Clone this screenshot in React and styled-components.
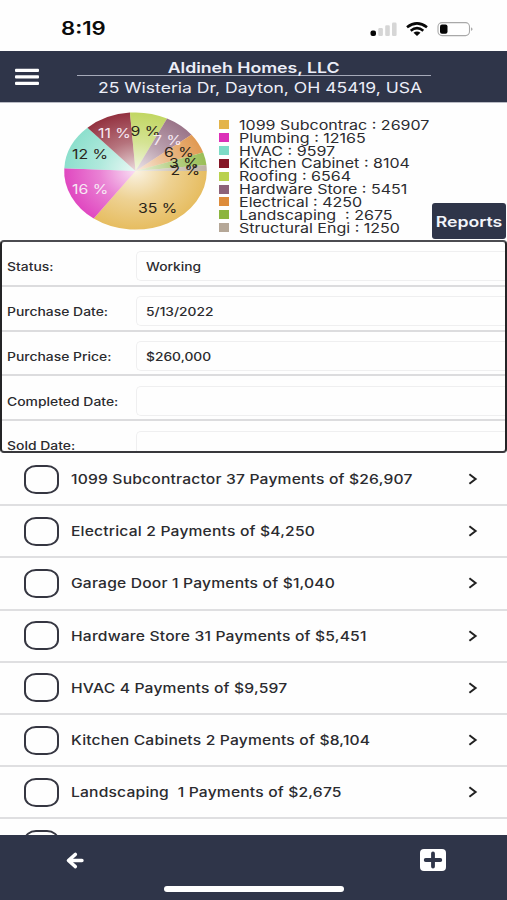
import React from 'react';
import styled, { createGlobalStyle } from 'styled-components';

const navy = '#2f3549';
const ink = '#2b2b2f';

const categories = [
  { name: '1099 Subcontrac', amount: 26907, color: '#e3b44b', percent: '35 %', x: 138, y: 213, dark: true },
  { name: 'Plumbing', amount: 12165, color: '#dc2fb8', percent: '16 %', x: 72, y: 193.5 },
  { name: 'HVAC', amount: 9597, color: '#7ddbc6', percent: '12 %', x: 72, y: 158.5, dark: true },
  { name: 'Kitchen Cabinet', amount: 8104, color: '#851626', percent: '11 %', x: 98, y: 138 },
  { name: 'Roofing', amount: 6564, color: '#b9d14d', percent: '9 %', x: 130.5, y: 136, dark: true },
  { name: 'Hardware Store', amount: 5451, color: '#8d6279', percent: '7 %', x: 153, y: 144.5 },
  { name: 'Electrical', amount: 4250, color: '#dd8c3b', percent: '6 %', x: 164, y: 156.5, dark: true },
  { name: 'Landscaping ', amount: 2675, color: '#8cb53f', percent: '3 %', x: 169, y: 167.5, dark: true },
  { name: 'Structural Engi', amount: 1250, color: '#b5a797', percent: '2 %', x: 170.5, y: 174.5, dark: true },
];

const details = [
  { label: 'Status:', value: 'Working' },
  { label: 'Purchase Date:', value: '5/13/2022' },
  { label: 'Purchase Price:', value: '$260,000' },
  { label: 'Completed Date:', value: '' },
  { label: 'Sold Date:', value: '' },
];

const payments = [
  '1099 Subcontractor 37 Payments of $26,907',
  'Electrical 2 Payments of $4,250',
  'Garage Door 1 Payments of $1,040',
  'Hardware Store 31 Payments of $5,451',
  'HVAC 4 Payments of $9,597',
  'Kitchen Cabinets 2 Payments of $8,104',
  'Landscaping  1 Payments of $2,675',
  '',
];

export default function App() {
  return (
    <Screen>
      <GlobalStyle />
      <StatusBar>
        <Text $size={18} $weight={600} $stretch={1.23} $color="#0b0b0b">
          8:19
        </Text>
        <StatusIcons />
      </StatusBar>
      <Header>
        <MenuIcon />
        <HeaderText>
          <Company>
            <Text $size={14.3} $weight={600} $stretch={1.235} $origin="center">
              Aldineh Homes, LLC
            </Text>
          </Company>
          <Address>
            <Text $size={14.3} $stretch={1.227} $origin="center">
              25 Wisteria Dr, Dayton, OH 45419, USA
            </Text>
          </Address>
        </HeaderText>
      </Header>
      <Summary>
        <PieChart />
        <Legend>
          {categories.map(({ name, amount, color }) => (
            <LegendItem key={name}>
              <Swatch $color={color} />
              <Text $size={13.2} $stretch={1.215}>
                {name} : {amount}
              </Text>
            </LegendItem>
          ))}
        </Legend>
        <ReportsButton>
          <Text $size={14.3} $weight={600} $stretch={1.235} $origin="center" $color="#f3f4fa">
            Reports
          </Text>
        </ReportsButton>
      </Summary>
      <Details>
        {details.map(({ label, value }) => (
          <DetailRow key={label}>
            <DetailLabel>
              <Text $size={11.5} $weight={500} $stretch={1.21}>
                {label}
              </Text>
            </DetailLabel>
            <Field>
              <Text $size={11.5} $weight={500} $stretch={1.2}>
                {value}
              </Text>
            </Field>
          </DetailRow>
        ))}
      </Details>
      <PaymentList>
        {payments.map((payment) => (
          <PaymentRow key={payment}>
            <Checkbox />
            <PaymentName>
              <Text $size={13} $weight={450} $stretch={1.203} $spacing={0.15}>
                {payment}
              </Text>
            </PaymentName>
            <Chevron />
          </PaymentRow>
        ))}
      </PaymentList>
      <Footer>
        <FooterActions>
          <BackIcon />
          <AddIcon />
        </FooterActions>
        <HomeIndicator />
      </Footer>
    </Screen>
  );
}

function PieChart() {
  const total = categories.reduce((sum, { amount }) => sum + amount, 0);
  let angle = 0;

  const slices = categories.map(({ name, amount, color }, i) => {
    const start = angle;
    angle += (amount / total) * Math.PI * 2;
    const large = angle - start > Math.PI ? 1 : 0;
    const d = `M0 0L${Math.cos(start)} ${Math.sin(start)}A1 1 0 ${large} 1 ${Math.cos(angle)} ${Math.sin(angle)}Z`;
    return { name, color, d, id: `slice-${i}` };
  });

  return (
    <Pie viewBox="50 103 160 137">
      <defs>
        {slices.map(({ id, color }) => (
          <radialGradient key={id} id={id} gradientUnits="userSpaceOnUse" cx="0" cy="0" r="1">
            <stop offset="0" stopColor={color} stopOpacity="0.15" />
            <stop offset="0.5" stopColor={color} stopOpacity="0.6" />
            <stop offset="1" stopColor={color} stopOpacity="0.88" />
          </radialGradient>
        ))}
      </defs>
      <g transform="translate(135.5 171) scale(71.3 58.6)">
        {slices.map(({ name, id, d }) => (
          <path key={name} d={d} fill={`url(#${id})`} />
        ))}
      </g>
      {categories.map(({ name, percent, x, y, dark }) => (
        <PieLabel key={name} $dark={dark} transform={`translate(${x} ${y}) scale(1.2 1)`}>
          {percent}
        </PieLabel>
      ))}
    </Pie>
  );
}

const StatusIcons = () => (
  <svg width="106" height="18" viewBox="369 19 106 18">
    <rect x="370.5" y="29.5" width="5.5" height="5.5" rx="2" fill="#050505" />
    <rect x="378.3" y="27" width="4.6" height="8" rx="1.3" fill="#d6d6d6" />
    <rect x="385.2" y="24.3" width="4.6" height="10.7" rx="1.3" fill="#d6d6d6" />
    <rect x="392" y="21.6" width="4.6" height="13.4" rx="1.3" fill="#d6d6d6" />
    <g fill="none" stroke="#080808" strokeWidth="2.6">
      <path d="M407 26.2Q417 18.4 427 26.2" />
      <path d="M410.7 29.7Q417 24.7 423.3 29.7" />
    </g>
    <path d="M413.5 31.8Q417 29.4 420.5 31.8L417 34.9Z" fill="#080808" />
    <rect x="438" y="21.6" width="31.5" height="13" rx="4" fill="#fff" stroke="#a9a9a9" strokeWidth="1.1" />
    <path d="M471.2 26.2Q473.8 28.1 471.2 30Z" fill="#999" />
    <rect x="440" y="23.5" width="7.5" height="9.2" rx="2" fill="#050505" />
  </svg>
);

const MenuIcon = () => (
  <svg width="24" height="18" viewBox="0 0 24 18" fill="#fff">
    <rect y="0.8" width="24" height="3.2" rx="1" />
    <rect y="7.3" width="24" height="3.2" rx="1" />
    <rect y="13.8" width="24" height="3.2" rx="1" />
  </svg>
);

const Chevron = () => (
  <svg width="10" height="12" viewBox="0 0 10 12" fill="none">
    <path d="M1.4 1.3L7.6 6L1.4 10.7" stroke="#222" strokeWidth="2" />
  </svg>
);

const BackIcon = () => (
  <svg width="18" height="17" viewBox="0 0 18 17" fill="none">
    <path
      d="M9.4 2.4L2.4 8.5L9.4 14.6M2.8 8.5H16"
      stroke="#fff"
      strokeWidth="3.4"
      strokeLinecap="round"
      strokeLinejoin="round"
    />
  </svg>
);

const AddIcon = () => (
  <svg width="26" height="22" viewBox="0 0 26 22">
    <rect width="26" height="22" rx="4" fill="#fff" />
    <path d="M13 4.4V17.6M5.7 11H20.3" stroke={navy} strokeWidth="3.8" strokeLinecap="round" />
  </svg>
);

const GlobalStyle = createGlobalStyle`
  * {
    box-sizing: border-box;
  }

  body {
    margin: 0;
    background: #fefefe;
    font-family: Inter, 'Liberation Sans', sans-serif;
  }

  svg {
    display: block;
    flex-shrink: 0;
  }
`;

const Screen = styled.div`
  display: flex;
  flex-direction: column;
  width: 507px;
  height: 900px;
  overflow: hidden;
  color: ${ink};
`;

const Text = styled.span`
  display: inline-block;
  color: ${({ $color }) => $color || 'inherit'};
  font-size: ${({ $size }) => $size}px;
  font-weight: ${({ $weight }) => $weight || 400};
  letter-spacing: ${({ $spacing }) => $spacing || 0}px;
  line-height: 1;
  white-space: pre;
  transform: scaleX(${({ $stretch }) => $stretch});
  transform-origin: ${({ $origin }) => $origin || 'left'};
`;

const StatusBar = styled.div`
  display: flex;
  justify-content: space-between;
  align-items: center;
  flex-shrink: 0;
  height: 51px;
  padding: 6px 32px 0 60.5px;
`;

const Header = styled.header`
  display: flex;
  align-items: center;
  flex-shrink: 0;
  height: 52px;
  padding-left: 15px;
  background: ${navy};
  border-bottom: 1px solid #b9bbc4;
  color: #eceef8;
`;

const HeaderText = styled.div`
  display: flex;
  flex-direction: column;
  width: 354px;
  height: 100%;
  margin-left: 38px;
`;

const Company = styled.div`
  display: flex;
  justify-content: center;
  align-items: flex-end;
  height: 25px;
  border-bottom: 1px solid #a6aab9;
`;

const Address = styled.div`
  display: flex;
  justify-content: center;
  padding: 5px 0 0 12px;
`;

const Summary = styled.section`
  display: flex;
  flex-shrink: 0;
  height: 137px;
  padding-left: 50px;
`;

const Pie = styled.svg`
  width: 160px;
  height: 137px;
`;

const PieLabel = styled.text`
  fill: ${({ $dark }) => ($dark ? '#2a2419' : '#f7e9f4')};
  font-size: 13.2px;
`;

const Legend = styled.ul`
  flex: 1;
  margin: 0;
  padding: 16px 0 0 9px;
  list-style: none;
`;

const LegendItem = styled.li`
  display: flex;
  align-items: center;
  height: 12.85px;
`;

const Swatch = styled.span`
  width: 10px;
  height: 9px;
  margin: 0 9.5px 1px 0;
  background: ${({ $color }) => $color};
`;

const ReportsButton = styled.button`
  display: flex;
  justify-content: center;
  align-items: center;
  align-self: flex-end;
  width: 74px;
  height: 36px;
  margin: 0 1px 1px 0;
  padding: 2px 0 0;
  border: 0;
  border-radius: 3px;
  background: ${navy};
  font-family: inherit;
`;

const Details = styled.section`
  flex-shrink: 0;
  height: 213px;
  border: 2px solid #242426;
  border-top-color: #4b4b50;
  border-bottom-color: #38383c;
  border-radius: 4px;
  overflow: hidden;
`;

const DetailRow = styled.div`
  display: flex;
  align-items: center;
  height: 44.8px;
  padding-top: 6px;
  border-bottom: 2px solid #dcdcde;
`;

const DetailLabel = styled.div`
  display: flex;
  width: 134px;
  padding: 3px 0 0 5px;
`;

const Field = styled.div`
  display: flex;
  align-items: center;
  flex: 1;
  height: 30px;
  padding: 3px 0 0 9px;
  border: 1px solid #efeff0;
  border-right: 0;
  border-radius: 5px 0 0 5px;
`;

const PaymentList = styled.ul`
  flex: 1;
  min-height: 0;
  margin: 0;
  padding: 1px 0 0;
  overflow: hidden;
  list-style: none;
`;

const PaymentRow = styled.li`
  display: flex;
  align-items: center;
  height: 52.2px;
  padding: 0 29px 0 24px;
  border-bottom: 2px solid #dfdfe1;
`;

const Checkbox = styled.span`
  width: 35px;
  height: 29px;
  border: 2px solid #353641;
  border-radius: 12px / 10px;
`;

const PaymentName = styled.div`
  flex: 1;
  padding: 0 0 2px 11.5px;
`;

const Footer = styled.footer`
  flex-shrink: 0;
  height: 65px;
  background: ${navy};
`;

const FooterActions = styled.div`
  display: flex;
  justify-content: space-between;
  align-items: center;
  height: 50px;
  padding: 0 61px 0 66px;
`;

const HomeIndicator = styled.div`
  width: 180px;
  height: 6px;
  margin: 1px auto 0;
  border-radius: 3px;
  background: #fff;
`;
